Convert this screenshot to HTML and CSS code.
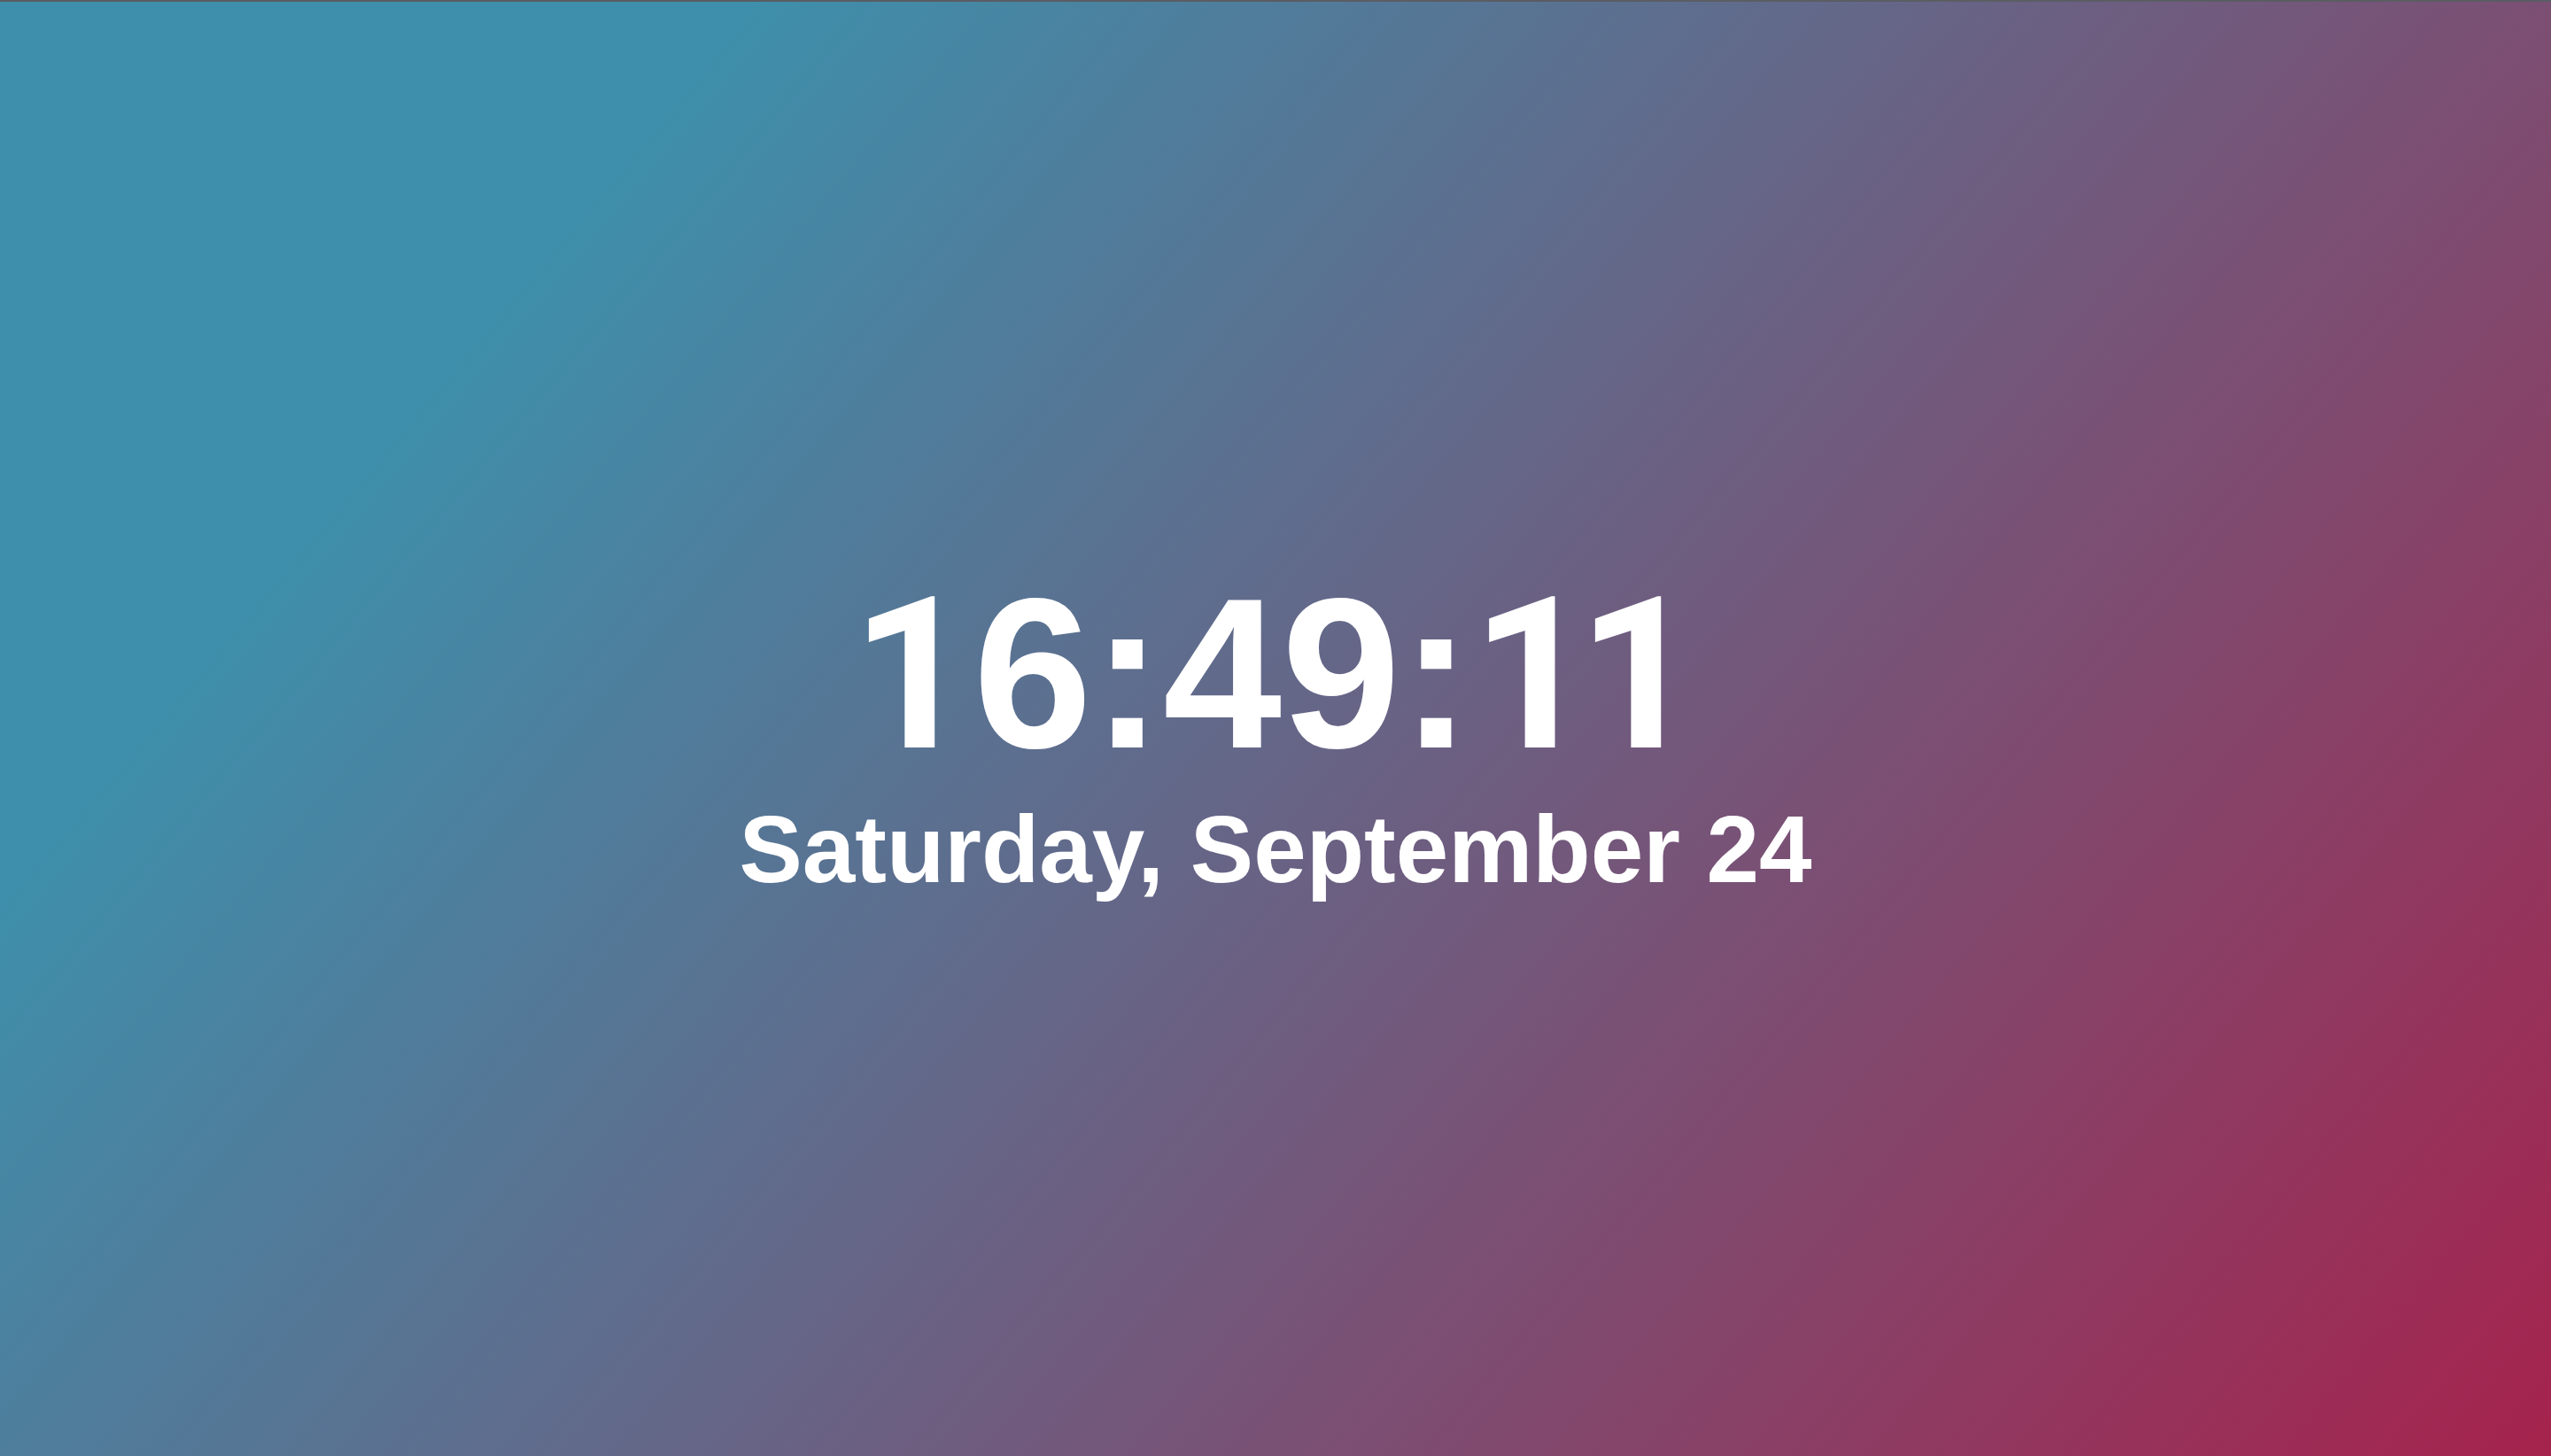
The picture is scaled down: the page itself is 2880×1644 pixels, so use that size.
FILE: index.html
```html
<!DOCTYPE html>
<html lang="en">
<head>
<meta charset="utf-8">
<title>Clock</title>
<link rel="stylesheet" href="styles.css">
</head>
<body>
<div class="topbar"></div>
<main class="screen">
  <div class="clock">
    <div class="time"><span class="one">1</span>6:49:<span class="one pair">11</span></div>
    <div class="date">Saturday, September 24</div>
  </div>
</main>
</body>
</html>
```
FILE: styles.css
```css
html, body {
  margin: 0;
  padding: 0;
  height: 100%;
}
body {
  display: flex;
  flex-direction: column;
  font-family: "Liberation Sans", Arial, Helvetica, sans-serif;
  color: #ffffff;
  overflow: hidden;
}
.topbar {
  height: 2px;
  background: #5a5d63;
  flex: 0 0 auto;
}
.screen {
  flex: 1 1 auto;
  display: flex;
  align-items: center;
  justify-content: center;
  background: linear-gradient(130deg, #3e8fab 0%, #3e8fab 20%, #a5234d 100%);
}
.clock {
  display: flex;
  flex-direction: column;
  align-items: center;
  gap: 24px;
  padding-top: 7px;
}
.time {
  font-size: 241px;
  font-weight: 700;
  line-height: 1;
}
.one {
  font-family: Roboto, "Liberation Sans", sans-serif;
  font-weight: 700;
  font-size: 0.995em;
}
.pair {
  letter-spacing: -0.074em;
  padding-right: 0.074em;
}
.date {
  font-size: 107px;
  font-weight: 700;
  line-height: 1;
}
```
